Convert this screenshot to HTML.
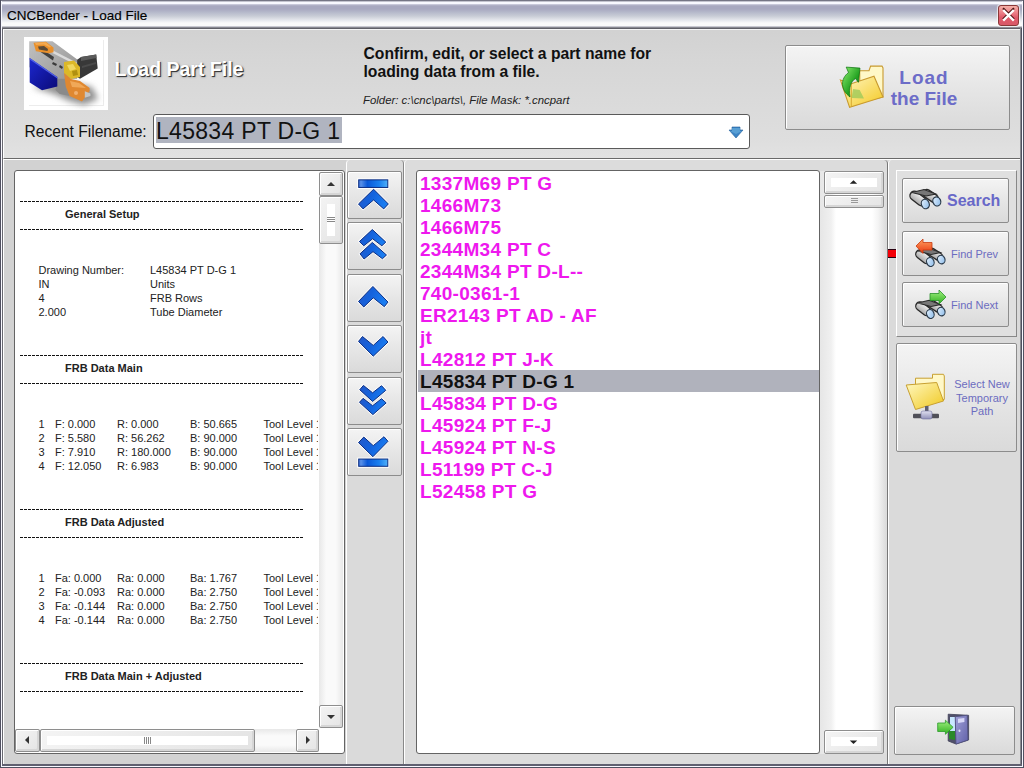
<!DOCTYPE html>
<html><head><meta charset="utf-8">
<style>
*{margin:0;padding:0;box-sizing:border-box}
html,body{width:1024px;height:768px;overflow:hidden;background:#d8d8d8}
body{position:relative;font-family:"Liberation Sans",sans-serif}
.a{position:absolute}
.t{position:absolute;white-space:pre;line-height:1}
.btn{position:absolute;border:1px solid #8c8c8c;border-radius:2px;background:linear-gradient(#f4f4f4,#e6e6e6 50%,#dadada);box-shadow:inset 1px 1px 0 #fff}
.sbtn{position:absolute;border:1px solid #8e8e8e;border-radius:2px;background:linear-gradient(135deg,#f4f4f4,#e4e4e4);box-shadow:inset 1px 1px 0 #fff,inset -2px -2px 0 #d6d6d6}
.dash{position:absolute;left:20px;width:284px;height:1px;background:repeating-linear-gradient(90deg,#111 0 2.6px,#aaa 2.6px 3px,transparent 3px 4px)}
.lt{font-size:11px;color:#222}
.li{position:absolute;left:420px;font:bold 19px "Liberation Sans";letter-spacing:0.3px;line-height:19px;color:#ee18ee;white-space:pre}
</style></head><body>

<!-- window frame / title -->
<div class="a" style="left:0;top:0;width:1024px;height:31px;background:linear-gradient(#5a5a6a 0,#9090a0 1px,#f8f8ff 2px,#f8f8ff 4px,#d8d8e8 4px,#b8b8cc 5px,#a8a8c0 6px,#a8a8c0 9px,#b4b8ca 12px,#c8ccd6 16px,#e4e6ec 20px,#fafafa 23px,#fafafa 26px,#e0e0e8 26px,#b0b0b8 27px,#606068 28px,#606068 29px,#f4f4f4 29px)"></div>
<div class="a" style="left:0;top:0;width:1px;height:768px;background:#505060"></div>
<div class="a" style="left:1px;top:1px;width:1px;height:767px;background:#f8f8ff"></div>
<div class="a" style="left:2px;top:28px;width:1px;height:738px;background:#686870"></div>
<div class="a" style="left:1023px;top:0;width:1px;height:768px;background:#505060"></div>
<div class="a" style="left:1022px;top:1px;width:1px;height:766px;background:#f8f8ff"></div>
<div class="a" style="left:1020px;top:28px;width:1px;height:738px;background:#8a8a90"></div><div class="a" style="left:1021px;top:28px;width:1px;height:738px;background:#505060"></div>
<div class="a" style="left:0;top:767px;width:1024px;height:1px;background:#505060"></div>
<div class="a" style="left:1px;top:766px;width:1022px;height:1px;background:#f8f8ff"></div>
<div class="a" style="left:2px;top:764px;width:1020px;height:2px;background:#606070"></div>
<div class="t" style="left:7px;top:9px;font-size:13.5px;color:#000;-webkit-text-stroke:0.15px #000">CNCBender - Load File</div>
<!-- close button -->
<div class="a" style="left:998px;top:5px;width:21px;height:21px;border:1px solid #8a3838;border-radius:3px;background:linear-gradient(#f4b0a8,#ec8088 35%,#e05a6a 60%,#d85868);box-shadow:0 0 1px 1px rgba(255,255,255,.7)"></div>
<svg class="a" style="left:998px;top:5px" width="21" height="21"><path d="M5 4 L16 15 M16 4 L5 15" stroke="#4a1010" stroke-width="2" transform="translate(0,-0.8)"/><path d="M5.2 5 L15.8 15.6 M15.8 5 L5.2 15.6" stroke="#fff" stroke-width="2.3"/></svg>

<!-- top panel -->
<div class="a" style="left:3px;top:29px;width:1017px;height:130px;background:linear-gradient(#d2d2d2 2px,#d6d6d6 30px,#dedede 110px,#e2e2e2);border-top:1px solid #f4f4f4;border-left:1px solid #fff;border-bottom:1px solid #6a6a6a"></div>
<div class="a" style="left:3px;top:159px;width:1017px;height:1px;background:#fff"></div>


<!-- machine icon -->
<div class="a" style="left:24px;top:37px;width:84px;height:73px;background:#fff"></div>
<svg class="a" style="left:24px;top:37px" width="84" height="73" viewBox="0 0 84 73">
<defs><linearGradient id="mg" x1="0" y1="0" x2="1" y2="1"><stop offset="0" stop-color="#c0c0c0"/><stop offset="1" stop-color="#8c8c8c"/></linearGradient>
<linearGradient id="mb" x1="0" y1="0" x2="1" y2="1"><stop offset="0" stop-color="#1c28d0"/><stop offset="1" stop-color="#0a0a78"/></linearGradient>
<filter id="bl" x="-30%" y="-30%" width="160%" height="160%"><feGaussianBlur stdDeviation="3"/></filter></defs>
<rect x="79" y="3" width="1" height="65" fill="#ececec"/><rect x="5" y="68" width="75" height="1" fill="#ececec"/>
<polygon points="8,50 30,57 45,64 60,68 74,62 68,50 40,44" fill="#909090" filter="url(#bl)"/>
<polygon points="5.2,4.3 28.5,4.3 55,23.8 53,41.8 44.7,41.8 36,57 31.4,53 5.2,30" fill="url(#mg)"/>
<polygon points="33.3,41.8 44.7,41.8 41.8,49.4 45.6,59 36,57 31.4,53" fill="#8a8a8a"/>
<polygon points="5.7,21 33.3,40 33.3,49.4 18,53.2 5.7,45.6" fill="url(#mb)"/>
<polygon points="5.7,21 33.3,40 33.3,41.5 5.7,22.5" fill="#5060e8"/>
<polygon points="14.3,9.5 30,20 29,23.5 13,12.5" fill="#404040"/>
<polygon points="29,25 33,27 32,29 28,27" fill="#3a3a3a"/><polygon points="36,28 39,30 38,32 35,30" fill="#3a3a3a"/>
<polygon points="28.5,13.3 53,25.7 53,28.5 28.5,16" fill="#dadada"/>
<polygon points="9.5,5.7 21.9,4.75 29.5,10.5 29.5,15.2 24.7,16.2 11.9,14.3" fill="#e8902c"/>
<polygon points="14,9.5 20,9 24,12 23.5,14 15,12.5" fill="#5a4a38"/><polygon points="11,6 21.5,5.3 27,9.5 26,10.5 20,7.5 12,8" fill="#f4aa50"/>
<polygon points="53.2,22.8 57,20 72.2,17.6 73.7,31.4 56,41.8 53.2,40" fill="#383838"/>
<polygon points="57,20 72.2,17.6 72.5,21 57,24" fill="#5a5a5a"/>
<polygon points="58,29 72,25 72,27 58,31" fill="#4a4a4a"/>
<polygon points="40,25 50,23.5 56,30 56,40 47,42 40,36" fill="#dcb828"/>
<polygon points="43,28 49,27 52,32 46,34" fill="#f0d860"/>
<polygon points="48,34 53,33 54,38 49,39" fill="#b09010"/>
<polygon points="40,36 47,42 56,44 65.6,51 65.6,54 58,64.6 45.6,59 41.8,49.4" fill="#e08830"/>
<polygon points="46,44 55,46 62,51 48,50" fill="#f0a858"/>
<circle cx="52" cy="56" r="2" fill="#f0b070"/>
<polygon points="60.8,54.2 66.5,56.5 66.5,59 60.8,60.8" fill="#c4c4c4"/>
</svg>
<div class="t" style="left:114.5px;top:60px;font-size:19.5px;font-weight:bold;color:#fff;text-shadow:1px 1px 0 #3a3a3a,1px 1px 2px #666">Load Part File</div>
<div class="t" style="left:363.5px;top:45.5px;font-size:15.7px;font-weight:bold;color:#111">Confirm, edit, or select a part name for</div>
<div class="t" style="left:363.5px;top:63.8px;font-size:15.7px;font-weight:bold;color:#111">loading data from a file.</div>
<div class="t" style="left:363px;top:94.5px;font-size:11.4px;font-style:italic;color:#222">Folder: c:\cnc\parts\, File Mask: *.cncpart</div>
<div class="t" style="left:24.5px;top:124.2px;font-size:15.6px;color:#111">Recent Filename:</div>
<!-- combobox -->
<div class="a" style="left:153px;top:114px;width:597px;height:35px;border:1px solid #5a5a5a;border-radius:3px;background:#fff"></div>
<div class="a" style="left:156px;top:117px;width:186px;height:26px;background:#b0b4c0"></div>
<div class="t" style="left:156px;top:119.5px;font-size:23px;letter-spacing:0.3px;color:#111">L45834 PT D-G 1</div>
<svg class="a" style="left:726px;top:125px" width="20" height="16"><path d="M6 2 H14 V5 H17 L10 13 L3 5 H6 Z" fill="#3c84c4" stroke="#24609a" stroke-width="0.6"/><path d="M6 3 H14 V6 H16 L10 9 L4 6 H6Z" fill="#6ab0e0" opacity=".6"/></svg>
<!-- load the file button -->
<div class="btn" style="left:785px;top:45px;width:225px;height:85px"></div>
<svg class="a" style="left:834px;top:60px" width="56" height="52" viewBox="0 0 56 52">
<defs><linearGradient id="fg" x1="0" y1="0" x2="1" y2="1"><stop offset="0" stop-color="#fff8c8"/><stop offset="1" stop-color="#f4c820"/></linearGradient>
<linearGradient id="ga" x1="0" y1="0" x2="1" y2="1"><stop offset="0" stop-color="#90f070"/><stop offset="0.6" stop-color="#20a020"/><stop offset="1" stop-color="#0a6a10"/></linearGradient></defs>
<path d="M25.7 10.8 L35 10.8 L36.6 6.1 L48 6.1 L49 8 L49 37 L26 42 Z" fill="#fff8c8" stroke="#c89a30" stroke-width="1.1"/>
<path d="M6.4 20 L17.3 23.7 L40 16.2 L49 37 L15.6 47.4 Z" fill="url(#fg)" stroke="#c89a30" stroke-width="1.1"/>
<path d="M17.3 23.7 L17.3 46" stroke="#d8a830" stroke-width="1"/>
<path d="M19 29 L25.7 30 L30 38.6 L17.6 38 Z" fill="#98c858" opacity=".75"/>
<path d="M16 37 C6.5 30 6 19 14.5 12.5 L12.2 7.1 L26 8.1 L24.4 22.3 L21.5 18.5 C17 21 14.5 28 16 37 Z" fill="url(#ga)" stroke="#0a7010" stroke-width="0.7"/>
</svg>
<div class="t" style="left:880px;top:68px;width:88px;text-align:center;font-size:19px;font-weight:bold;color:#6c6cc8"><span style="letter-spacing:1px">Load</span></div>
<div class="t" style="left:880px;top:89px;width:88px;text-align:center;font-size:19px;font-weight:bold;color:#6c6cc8">the File</div>

<!-- bottom panels -->
<div class="a" style="left:3px;top:160px;width:343px;height:604px;background:#d2d2d2;border-left:1px solid #fff"></div>
<div class="a" style="left:346px;top:160px;width:58px;height:604px;background:#dadada;border-left:1px solid #fff;border-right:1px solid #888;border-radius:4px 4px 0 0"></div>
<div class="a" style="left:404px;top:160px;width:484px;height:604px;background:#dcdcdc;border-left:1px solid #fff;border-right:1px solid #777;border-radius:4px 4px 0 0"></div>
<div class="a" style="left:888px;top:160px;width:132px;height:604px;background:#dadada;border-left:1px solid #fff;border-radius:4px 4px 0 0"></div>

<div class="a" style="left:14px;top:170px;width:331px;height:584px;border:1px solid #646464;border-radius:3px;background:#fff;overflow:hidden"></div>
<div class="a" style="left:15px;top:171px;width:303px;height:557px;overflow:hidden">
<div class="dash" style="left:5px;top:30px"></div>
<div class="t lt" style="left:50px;top:37.7px;font-weight:bold;">General Setup</div>
<div class="dash" style="left:5px;top:58px"></div>
<div class="dash" style="left:5px;top:184px"></div>
<div class="t lt" style="left:50px;top:191.7px;font-weight:bold;">FRB Data Main</div>
<div class="dash" style="left:5px;top:212px"></div>
<div class="dash" style="left:5px;top:338px"></div>
<div class="t lt" style="left:50px;top:345.7px;font-weight:bold;">FRB Data Adjusted</div>
<div class="dash" style="left:5px;top:366px"></div>
<div class="dash" style="left:5px;top:492px"></div>
<div class="t lt" style="left:50px;top:499.7px;font-weight:bold;">FRB Data Main + Adjusted</div>
<div class="dash" style="left:5px;top:520px"></div>
<div class="t lt" style="left:23.5px;top:93.7px;">Drawing Number:</div>
<div class="t lt" style="left:135px;top:93.7px;">L45834 PT D-G 1</div>
<div class="t lt" style="left:23.5px;top:107.7px;">IN</div>
<div class="t lt" style="left:135px;top:107.7px;">Units</div>
<div class="t lt" style="left:23.5px;top:121.7px;">4</div>
<div class="t lt" style="left:135px;top:121.7px;">FRB Rows</div>
<div class="t lt" style="left:23.5px;top:135.7px;">2.000</div>
<div class="t lt" style="left:135px;top:135.7px;">Tube Diameter</div>
<div class="t lt" style="left:23.5px;top:247.7px;">1</div>
<div class="t lt" style="left:40px;top:247.7px;">F: 0.000</div>
<div class="t lt" style="left:102px;top:247.7px;">R: 0.000</div>
<div class="t lt" style="left:175px;top:247.7px;">B: 50.665</div>
<div class="t lt" style="left:248.5px;top:247.7px;">Tool Level 1</div>
<div class="t lt" style="left:23.5px;top:261.7px;">2</div>
<div class="t lt" style="left:40px;top:261.7px;">F: 5.580</div>
<div class="t lt" style="left:102px;top:261.7px;">R: 56.262</div>
<div class="t lt" style="left:175px;top:261.7px;">B: 90.000</div>
<div class="t lt" style="left:248.5px;top:261.7px;">Tool Level 1</div>
<div class="t lt" style="left:23.5px;top:275.7px;">3</div>
<div class="t lt" style="left:40px;top:275.7px;">F: 7.910</div>
<div class="t lt" style="left:102px;top:275.7px;">R: 180.000</div>
<div class="t lt" style="left:175px;top:275.7px;">B: 90.000</div>
<div class="t lt" style="left:248.5px;top:275.7px;">Tool Level 1</div>
<div class="t lt" style="left:23.5px;top:289.7px;">4</div>
<div class="t lt" style="left:40px;top:289.7px;">F: 12.050</div>
<div class="t lt" style="left:102px;top:289.7px;">R: 6.983</div>
<div class="t lt" style="left:175px;top:289.7px;">B: 90.000</div>
<div class="t lt" style="left:248.5px;top:289.7px;">Tool Level 1</div>
<div class="t lt" style="left:23.5px;top:401.7px;">1</div>
<div class="t lt" style="left:40px;top:401.7px;">Fa: 0.000</div>
<div class="t lt" style="left:102px;top:401.7px;">Ra: 0.000</div>
<div class="t lt" style="left:175px;top:401.7px;">Ba: 1.767</div>
<div class="t lt" style="left:248.5px;top:401.7px;">Tool Level 1</div>
<div class="t lt" style="left:23.5px;top:415.7px;">2</div>
<div class="t lt" style="left:40px;top:415.7px;">Fa: -0.093</div>
<div class="t lt" style="left:102px;top:415.7px;">Ra: 0.000</div>
<div class="t lt" style="left:175px;top:415.7px;">Ba: 2.750</div>
<div class="t lt" style="left:248.5px;top:415.7px;">Tool Level 1</div>
<div class="t lt" style="left:23.5px;top:429.7px;">3</div>
<div class="t lt" style="left:40px;top:429.7px;">Fa: -0.144</div>
<div class="t lt" style="left:102px;top:429.7px;">Ra: 0.000</div>
<div class="t lt" style="left:175px;top:429.7px;">Ba: 2.750</div>
<div class="t lt" style="left:248.5px;top:429.7px;">Tool Level 1</div>
<div class="t lt" style="left:23.5px;top:443.7px;">4</div>
<div class="t lt" style="left:40px;top:443.7px;">Fa: -0.144</div>
<div class="t lt" style="left:102px;top:443.7px;">Ra: 0.000</div>
<div class="t lt" style="left:175px;top:443.7px;">Ba: 2.750</div>
<div class="t lt" style="left:248.5px;top:443.7px;">Tool Level 1</div>
</div>
<div class="a" style="left:319px;top:172px;width:24px;height:556px;background:linear-gradient(90deg,#e8e8e8,#fafafa 30%,#fafafa 70%,#e8e8e8)"></div>
<div class="sbtn" style="left:319px;top:172px;width:24px;height:24px"></div>
<svg class="a" style="left:319px;top:172px" width="24" height="24"><path d="M8 14 L12 10 L16 14Z" fill="#333"/></svg>
<div class="sbtn" style="left:319px;top:196px;width:24px;height:48px"></div>
<div class="a" style="left:327px;top:204px;width:8px;height:32px;background:#fff"></div>
<div class="a" style="left:327px;top:217px;width:8px;height:5px;background:repeating-linear-gradient(#888 0 1px,transparent 1px 2px)"></div>
<div class="sbtn" style="left:319px;top:705px;width:24px;height:23px"></div>
<svg class="a" style="left:319px;top:705px" width="24" height="23"><path d="M8 10 L12 14 L16 10Z" fill="#333"/></svg>
<div class="a" style="left:15px;top:729px;width:304px;height:23px;background:linear-gradient(#e8e8e8,#fafafa 30%,#fafafa 70%,#e8e8e8)"></div>
<div class="sbtn" style="left:15px;top:729px;width:25px;height:23px"></div>
<svg class="a" style="left:15px;top:729px" width="25" height="23"><path d="M14 7 L10 11 L14 15Z" fill="#333"/></svg>
<div class="sbtn" style="left:40px;top:729px;width:215px;height:23px"></div>
<div class="a" style="left:47px;top:736px;width:201px;height:9px;background:#fff"></div>
<div class="a" style="left:144px;top:737px;width:7px;height:7px;background:repeating-linear-gradient(90deg,#888 0 1px,transparent 1px 2px)"></div>
<div class="sbtn" style="left:296px;top:729px;width:23px;height:23px"></div>
<svg class="a" style="left:296px;top:729px" width="23" height="23"><path d="M10 7 L14 11 L10 15Z" fill="#333"/></svg>
<svg width="0" height="0" style="position:absolute"><defs>
<linearGradient id="cg" x1="0" y1="0" x2="1" y2="0.3"><stop offset="0" stop-color="#2458c8"/><stop offset="0.5" stop-color="#1462dc"/><stop offset="1" stop-color="#1a7cf0"/></linearGradient>
<linearGradient id="bg" x1="0" y1="0" x2="1" y2="0"><stop offset="0" stop-color="#3a70d8"/><stop offset="0.08" stop-color="#5890e8"/><stop offset="0.3" stop-color="#0a58d8"/><stop offset="0.7" stop-color="#1a80f0"/><stop offset="1" stop-color="#50b0f8"/></linearGradient>
</defs></svg>
<div class="btn" style="left:347px;top:171px;width:55px;height:48px"></div>
<div class="btn" style="left:347px;top:222px;width:55px;height:48px"></div>
<div class="btn" style="left:347px;top:274px;width:55px;height:48px"></div>
<div class="btn" style="left:347px;top:325px;width:55px;height:48px"></div>
<div class="btn" style="left:347px;top:377px;width:55px;height:48px"></div>
<div class="btn" style="left:347px;top:428px;width:55px;height:48px"></div>
<svg class="a" style="left:347px;top:171px" width="55" height="48"><rect x="11.25" y="8.4" width="30.0" height="8.499999999999998" fill="none" stroke="#fff" stroke-width="2"/><rect x="11.7" y="8.85" width="29.1" height="7.599999999999998" fill="url(#bg)" stroke="#0a2c80" stroke-width="1"/><path d="M26.6,18.1 L41.6,33.1 L36.9,38.1 L26.6,29 L15.9,38.1 L11.25,33.1 Z" fill="none" stroke="#fff" stroke-width="2.2" stroke-linejoin="round" opacity=".9"/><path d="M26.6,18.1 L41.6,33.1 L36.9,38.1 L26.6,29 L15.9,38.1 L11.25,33.1 Z" fill="url(#cg)" stroke="#0a2c80" stroke-width="1" stroke-linejoin="miter" transform="translate(0.45,0.45) scale(0.983)" /></svg>
<svg class="a" style="left:347px;top:222px" width="55" height="48"><path d="M25.3,7.2 L39,20 L35,23.75 L25.6,16.6 L16.6,23.75 L12.2,19.4 Z" fill="none" stroke="#fff" stroke-width="2.2" stroke-linejoin="round" opacity=".9"/><path d="M25.3,7.2 L39,20 L35,23.75 L25.6,16.6 L16.6,23.75 L12.2,19.4 Z" fill="url(#cg)" stroke="#0a2c80" stroke-width="1" stroke-linejoin="miter" transform="translate(0.45,0.45) scale(0.983)" /><path d="M25.3,20.3 L39.7,33.1 L35.6,36.9 L26,29.7 L16.9,37.2 L12.8,31.9 Z" fill="none" stroke="#fff" stroke-width="2.2" stroke-linejoin="round" opacity=".9"/><path d="M25.3,20.3 L39.7,33.1 L35.6,36.9 L26,29.7 L16.9,37.2 L12.8,31.9 Z" fill="url(#cg)" stroke="#0a2c80" stroke-width="1" stroke-linejoin="miter" transform="translate(0.45,0.45) scale(0.983)" /></svg>
<svg class="a" style="left:347px;top:274px" width="55" height="48"><path d="M25.9,12.2 L41.25,28.1 L37.5,32.8 L26.25,23.75 L16.6,33.1 L11.25,27.5 Z" fill="none" stroke="#fff" stroke-width="2.2" stroke-linejoin="round" opacity=".9"/><path d="M25.9,12.2 L41.25,28.1 L37.5,32.8 L26.25,23.75 L16.6,33.1 L11.25,27.5 Z" fill="url(#cg)" stroke="#0a2c80" stroke-width="1" stroke-linejoin="miter" transform="translate(0.45,0.45) scale(0.983)" /></svg>
<svg class="a" style="left:347px;top:325px" width="55" height="48"><path d="M15.3,11.25 L26.25,20.3 L36.25,11.25 L41.25,16.9 L26.25,31.25 L11.25,16.25 Z" fill="none" stroke="#fff" stroke-width="2.2" stroke-linejoin="round" opacity=".9"/><path d="M15.3,11.25 L26.25,20.3 L36.25,11.25 L41.25,16.9 L26.25,31.25 L11.25,16.25 Z" fill="url(#cg)" stroke="#0a2c80" stroke-width="1" stroke-linejoin="miter" transform="translate(0.45,0.45) scale(0.983)" /></svg>
<svg class="a" style="left:347px;top:377px" width="55" height="48"><path d="M16.25,8.1 L25.6,15.6 L34.7,8.4 L39,13.1 L25.6,24.4 L12.5,12.5 Z" fill="none" stroke="#fff" stroke-width="2.2" stroke-linejoin="round" opacity=".9"/><path d="M16.25,8.1 L25.6,15.6 L34.7,8.4 L39,13.1 L25.6,24.4 L12.5,12.5 Z" fill="url(#cg)" stroke="#0a2c80" stroke-width="1" stroke-linejoin="miter" transform="translate(0.45,0.45) scale(0.983)" /><path d="M15.9,21.25 L25.6,28.75 L34.7,21.6 L39.4,25.9 L25.9,37.8 L12.2,25.3 Z" fill="none" stroke="#fff" stroke-width="2.2" stroke-linejoin="round" opacity=".9"/><path d="M15.9,21.25 L25.6,28.75 L34.7,21.6 L39.4,25.9 L25.9,37.8 L12.2,25.3 Z" fill="url(#cg)" stroke="#0a2c80" stroke-width="1" stroke-linejoin="miter" transform="translate(0.45,0.45) scale(0.983)" /></svg>
<svg class="a" style="left:347px;top:428px" width="55" height="48"><path d="M16.6,8.75 L26.25,17.5 L37.2,8.4 L41.25,13.1 L25.9,28.75 L11.25,14.4 Z" fill="none" stroke="#fff" stroke-width="2.2" stroke-linejoin="round" opacity=".9"/><path d="M16.6,8.75 L26.25,17.5 L37.2,8.4 L41.25,13.1 L25.9,28.75 L11.25,14.4 Z" fill="url(#cg)" stroke="#0a2c80" stroke-width="1" stroke-linejoin="miter" transform="translate(0.45,0.45) scale(0.983)" /><rect x="11.25" y="30.6" width="30.0" height="8.149999999999999" fill="none" stroke="#fff" stroke-width="2"/><rect x="11.7" y="31.05" width="29.1" height="7.249999999999998" fill="url(#bg)" stroke="#0a2c80" stroke-width="1"/></svg>
<div class="a" style="left:416px;top:170px;width:404px;height:584px;border:1px solid #646464;border-radius:3px;background:#fff"></div>
<div class="a" style="left:418px;top:370px;width:401px;height:22px;background:#b0b2bc"></div>
<div class="li" style="top:173.6px;color:#ee18ee">1337M69 PT G</div>
<div class="li" style="top:195.6px;color:#ee18ee">1466M73</div>
<div class="li" style="top:217.6px;color:#ee18ee">1466M75</div>
<div class="li" style="top:239.6px;color:#ee18ee">2344M34 PT C</div>
<div class="li" style="top:261.6px;color:#ee18ee">2344M34 PT D-L--</div>
<div class="li" style="top:283.6px;color:#ee18ee">740-0361-1</div>
<div class="li" style="top:305.6px;color:#ee18ee">ER2143 PT AD - AF</div>
<div class="li" style="top:327.6px;color:#ee18ee">jt</div>
<div class="li" style="top:349.6px;color:#ee18ee">L42812 PT J-K</div>
<div class="li" style="top:371.6px;color:#111">L45834 PT D-G 1</div>
<div class="li" style="top:393.6px;color:#ee18ee">L45834 PT D-G</div>
<div class="li" style="top:415.6px;color:#ee18ee">L45924 PT F-J</div>
<div class="li" style="top:437.6px;color:#ee18ee">L45924 PT N-S</div>
<div class="li" style="top:459.6px;color:#ee18ee">L51199 PT C-J</div>
<div class="li" style="top:481.6px;color:#ee18ee">L52458 PT G</div>
<div class="a" style="left:820px;top:171px;width:67px;height:583px;background:linear-gradient(90deg,#e6e6e6,#f0f0f0 11px,#fff 16px,#fff 52px,#f4f4f4 58px,#dcdcdc 66px)"></div>
<div class="sbtn" style="left:824px;top:171px;width:60px;height:23px"></div>
<div class="a" style="left:831px;top:178px;width:46px;height:9px;background:#fff"></div>
<svg class="a" style="left:824px;top:171px" width="60" height="23"><path d="M25.8 12.8 L29.5 9.3 L33.2 12.8Z" fill="#222"/></svg>
<div class="sbtn" style="left:824px;top:195px;width:60px;height:13px"></div>
<div class="a" style="left:851px;top:198px;width:7px;height:6px;background:repeating-linear-gradient(#999 0 1px,transparent 1px 2px)"></div>
<div class="sbtn" style="left:824px;top:730px;width:60px;height:24px"></div>
<div class="a" style="left:831px;top:737px;width:46px;height:9px;background:#fff"></div>
<svg class="a" style="left:824px;top:730px" width="60" height="24"><path d="M25.8 10.5 L29.5 14 L33.2 10.5Z" fill="#222"/></svg>
<div class="a" style="left:896px;top:170px;width:121px;height:167px;border:1px solid;border-color:#fff #888 #888 #fff;background:#e0e0e0"></div>
<div class="btn" style="left:902px;top:178px;width:107px;height:45px"></div>
<div class="t" style="left:947px;top:193px;font-size:16px;font-weight:bold;color:#6868c8">Search</div>
<div class="btn" style="left:902px;top:231px;width:107px;height:45px"></div>
<div class="t" style="left:951px;top:248.5px;font-size:11px;color:#6c6cc0">Find Prev</div>
<div class="btn" style="left:902px;top:282px;width:107px;height:45px"></div>
<div class="t" style="left:951px;top:299.7px;font-size:11px;color:#6c6cc0">Find Next</div>
<div class="a" style="left:888px;top:249px;width:8px;height:9px;background:#f40008;border-top:1px solid #2a0010;border-bottom:1px solid #2a0010"></div>
<div class="btn" style="left:896px;top:343px;width:121px;height:109px"></div>
<div class="t" style="left:942px;width:80px;text-align:center;top:378.6px;font-size:11px;color:#6c6cc0">Select New</div>
<div class="t" style="left:942px;width:80px;text-align:center;top:392.6px;font-size:11px;color:#6c6cc0">Temporary</div>
<div class="t" style="left:942px;width:80px;text-align:center;top:406.1px;font-size:11px;color:#6c6cc0">Path</div>
<div class="btn" style="left:894px;top:706px;width:121px;height:49px"></div>
<svg width="0" height="0" style="position:absolute"><defs>
<linearGradient id="lens" x1="0" y1="0" x2="1" y2="1"><stop offset="0" stop-color="#e8f4ff"/><stop offset="1" stop-color="#88b8e8"/></linearGradient>
<linearGradient id="barrel" x1="0" y1="0" x2="0" y2="1"><stop offset="0" stop-color="#f0f0f0"/><stop offset="1" stop-color="#a8a8a8"/></linearGradient>
<linearGradient id="ra" x1="0" y1="0" x2="0" y2="1"><stop offset="0" stop-color="#ffa060"/><stop offset="1" stop-color="#e83810"/></linearGradient>
<linearGradient id="gra" x1="0" y1="0" x2="0" y2="1"><stop offset="0" stop-color="#a0f080"/><stop offset="1" stop-color="#30b020"/></linearGradient>
<g id="bino">
<rect x="3" y="10" width="18" height="9" rx="4.5" transform="rotate(38 12 14.5)" fill="url(#barrel)" stroke="#2a2a2a" stroke-width="1.4"/>
<rect x="16" y="8" width="17" height="8" rx="4" transform="rotate(33 24.5 12)" fill="url(#barrel)" stroke="#2a2a2a" stroke-width="1.4"/>
<path d="M6 8.5 L18 5.5 L30 10 L20 12 Z" fill="#777" stroke="#2a2a2a" stroke-width="1.1"/>
<ellipse cx="19.3" cy="20" rx="3.9" ry="4.8" transform="rotate(-20 19.3 20)" fill="url(#lens)" stroke="#2a3a4a" stroke-width="1.2"/>
<ellipse cx="30.8" cy="17.4" rx="3.9" ry="4.6" transform="rotate(-20 30.8 17.4)" fill="url(#lens)" stroke="#2a3a4a" stroke-width="1.2"/>
</g>
</defs></svg>
<svg class="a" style="left:906px;top:184px" width="40" height="30"><use href="#bino"/></svg>
<svg class="a" style="left:912px;top:243px" width="40" height="30"><use href="#bino" transform="scale(0.95)"/></svg>
<svg class="a" style="left:912px;top:295px" width="40" height="30"><use href="#bino" transform="scale(0.95)"/></svg>
<svg class="a" style="left:912px;top:236px" width="26" height="22"><path d="M4 10 L11 3 L11 6.5 L20 6.5 L20 14 L11 14 L11 17.5 Z" fill="url(#ra)" stroke="#c83a10" stroke-width="0.8" stroke-linejoin="round"/></svg>
<svg class="a" style="left:926px;top:287px" width="24" height="20"><path d="M20 10 L13 3 L13 6.5 L4 6.5 L4 13.5 L13 13.5 L13 17 Z" fill="url(#gra)" stroke="#28902a" stroke-width="0.8" stroke-linejoin="round"/></svg>
<svg class="a" style="left:904px;top:372px" width="44" height="50" viewBox="0 0 44 50">
<defs><linearGradient id="fg2" x1="0" y1="0" x2="1" y2="1"><stop offset="0" stop-color="#fff8c0"/><stop offset="1" stop-color="#f0c820"/></linearGradient>
<linearGradient id="conn" x1="0" y1="0" x2="0" y2="1"><stop offset="0" stop-color="#e0e0f0"/><stop offset="1" stop-color="#9090b8"/></linearGradient></defs>
<path d="M11.5 6.2 L28.5 6.2 L28.5 2.3 L39.5 2.3 L40.3 4 L40.3 27.4 L11.5 32 Z" fill="#fff8c8" stroke="#c8a030" stroke-width="1"/>
<path d="M2.2 13 L32.7 10.5 L39.5 29 L11.5 37.5 Z" fill="url(#fg2)" stroke="#c8a030" stroke-width="1"/>
<rect x="21" y="34" width="3.5" height="8" fill="#606070"/>
<rect x="9" y="41.8" width="26" height="4.5" rx="1" fill="#505058"/>
<rect x="17" y="39" width="11" height="8" rx="2" fill="url(#conn)" stroke="#7070a0" stroke-width=".6"/>
</svg>
<svg class="a" style="left:936px;top:712px" width="36" height="36" viewBox="0 0 36 36">
<defs><linearGradient id="door" x1="0" y1="0" x2="1" y2="1"><stop offset="0" stop-color="#a0a0d8"/><stop offset="1" stop-color="#6060a8"/></linearGradient></defs>
<path d="M12.2 2.2 L32.6 3.3 L32.6 28 L20 32 L12.2 29 Z" fill="#50506a" stroke="#404058" stroke-width=".8"/>
<path d="M14 5 L19 5 L19 19 L14 19Z" fill="#c8e8ff"/>
<path d="M13 19 L19 19 L19 28 L13 27Z" fill="#2a8a2a"/>
<path d="M19.2 4.7 L31.2 3.3 L32 28 L20 32.1 Z" fill="url(#door)" stroke="#505080" stroke-width=".8"/>
<path d="M22 6.8 L28.4 6 L28.4 10 L22 11 Z" fill="#d8d8f8"/>
<ellipse cx="23.5" cy="18.8" rx="1" ry="1.2" fill="#e0e0f8"/>
<path d="M17.1 15.3 L9.4 8.2 L9.4 11 L1.7 11 L1.7 19.5 L9.4 19.5 L9.4 22.3 Z" fill="url(#gra)" stroke="#2a9a2a" stroke-width=".8" stroke-linejoin="round"/>
</svg>
</body></html>
